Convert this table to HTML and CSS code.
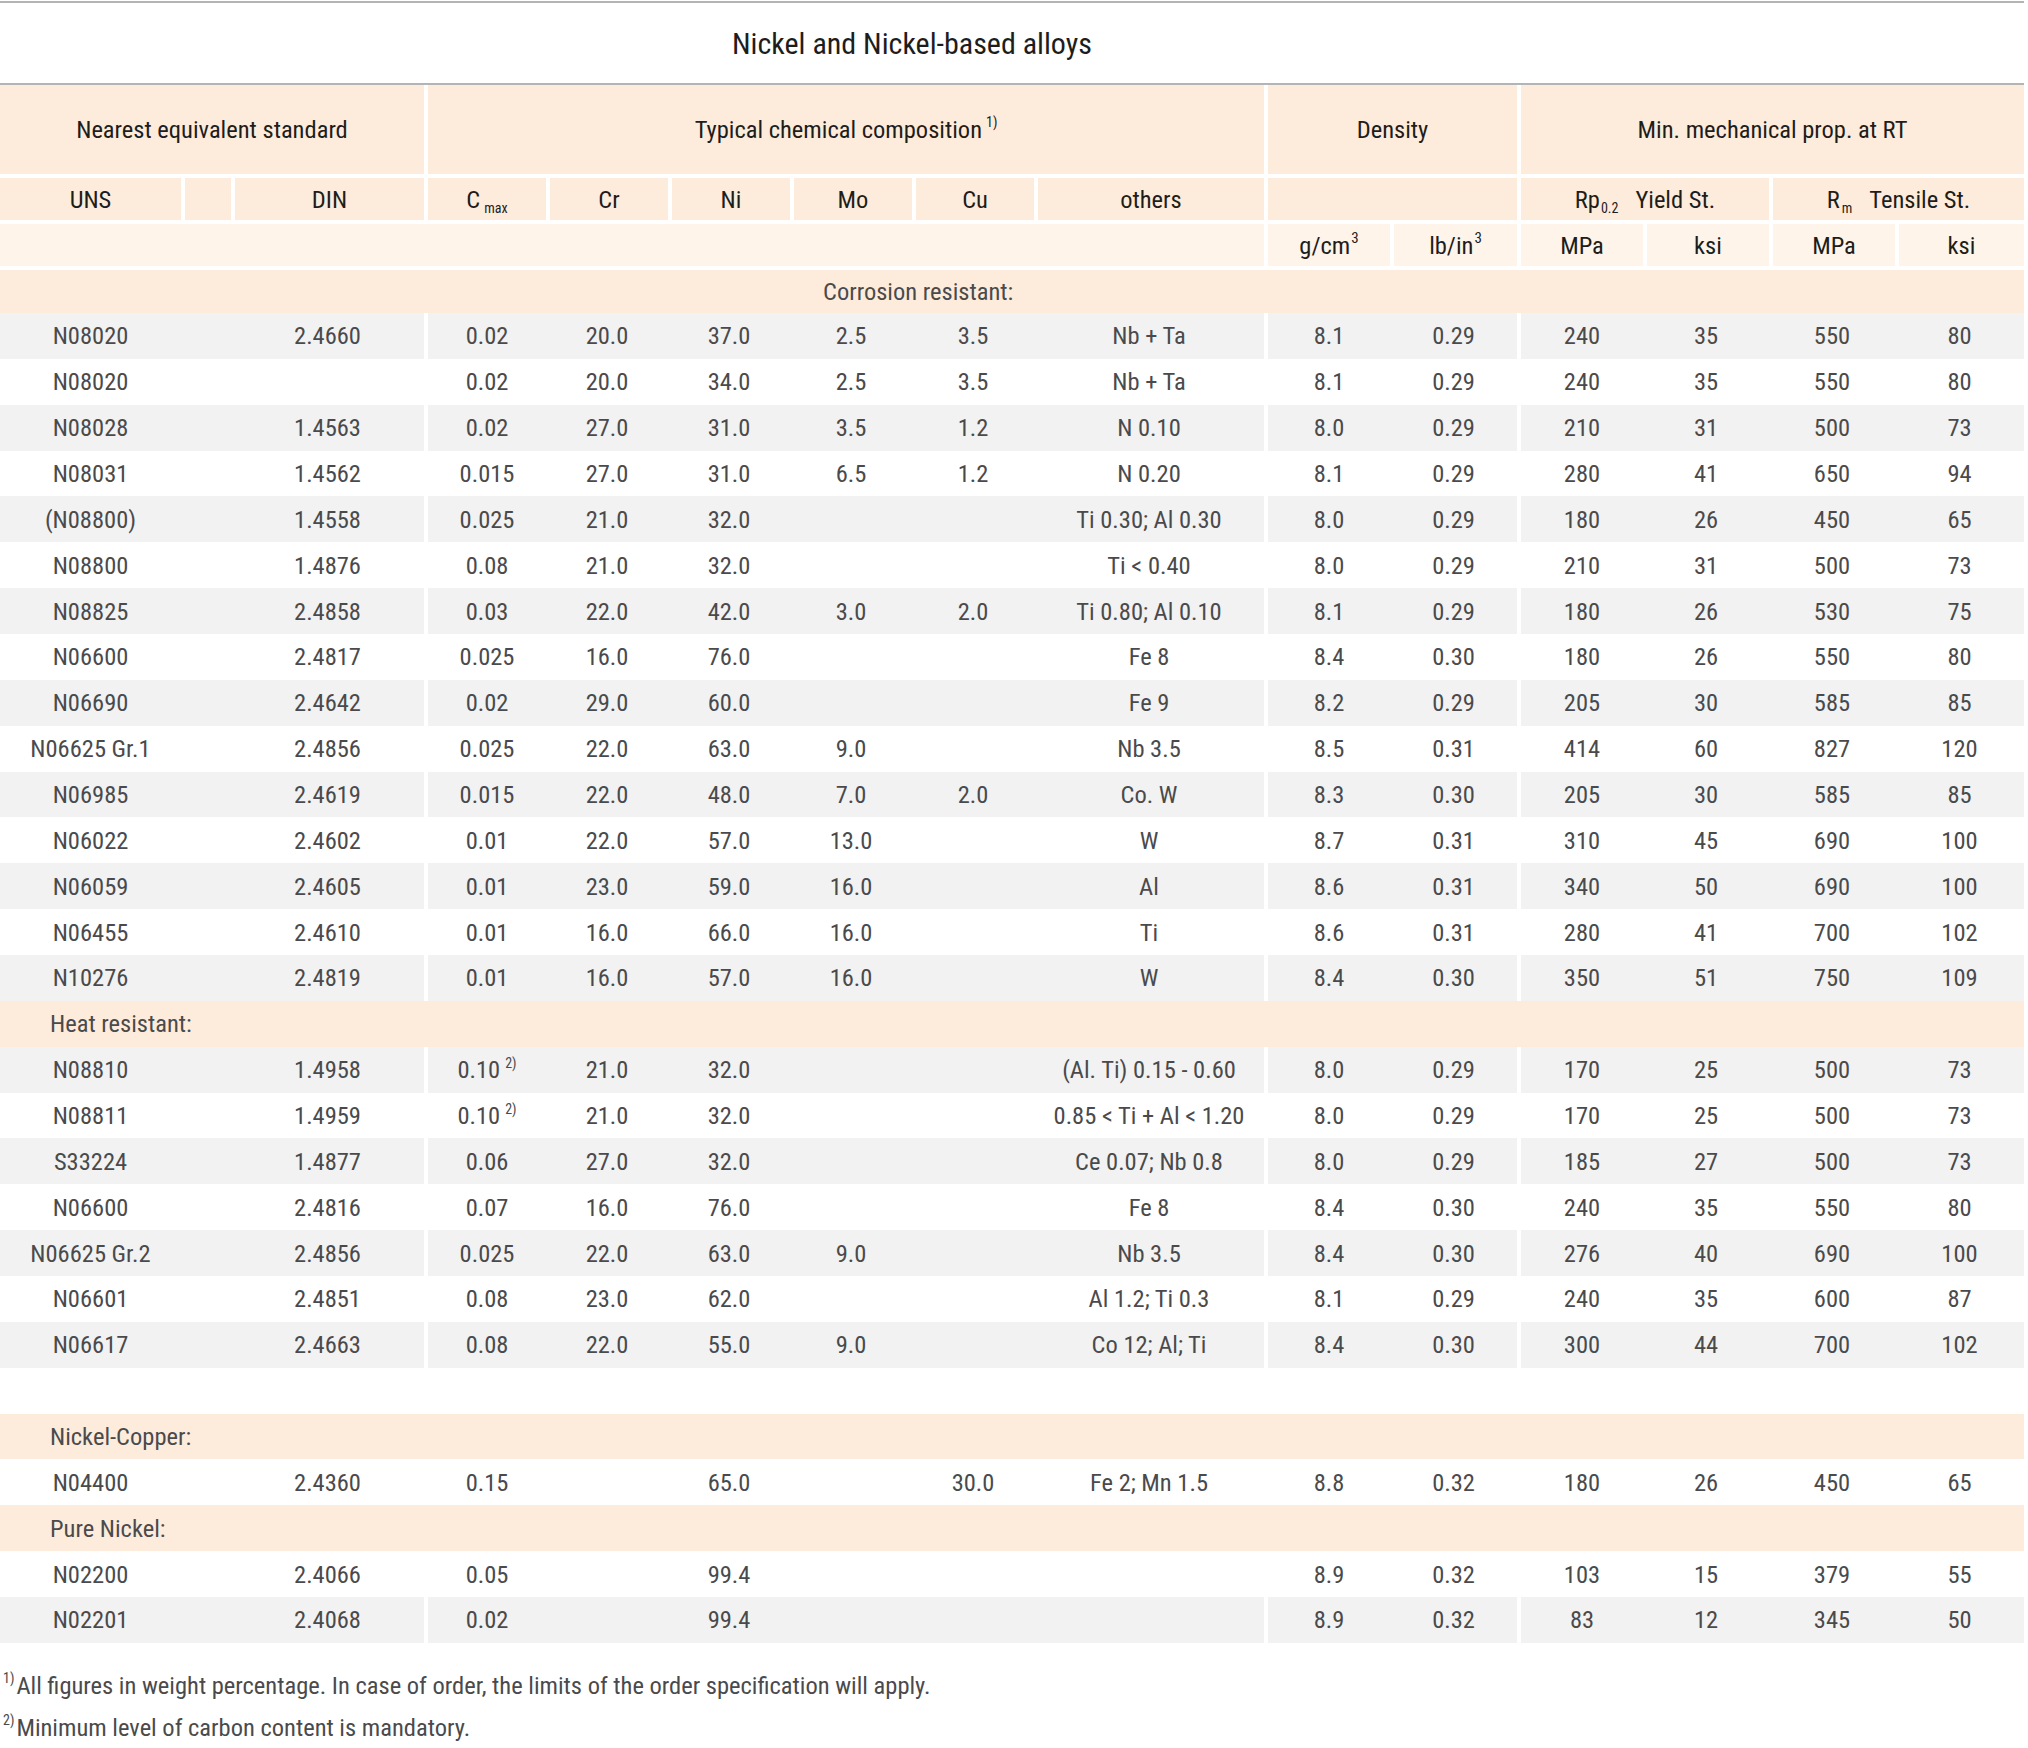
FILE: index.html
```html
<!DOCTYPE html>
<html lang="en">
<head>
<meta charset="utf-8">
<title>Nickel and Nickel-based alloys</title>
<link rel="stylesheet" href="styles.css">
</head>
<body>
<div class="sheet">
  <div class="title">Nickel and Nickel-based alloys</div>

  <div class="row hdr1">
    <div class="c s3">Nearest equivalent standard</div>
    <div class="c s6 g">Typical chemical composition <sup class="fn">1)</sup></div>
    <div class="c s2 g">Density</div>
    <div class="c s4 g">Min. mechanical prop. at RT</div>
  </div>

  <div class="row hdr2">
    <div class="c">UNS</div>
    <div class="c g"></div>
    <div class="c g">DIN</div>
    <div class="c g">C<sub class="sb sb-c">max</sub></div>
    <div class="c g">Cr</div>
    <div class="c g">Ni</div>
    <div class="c g">Mo</div>
    <div class="c g">Cu</div>
    <div class="c g">others</div>
    <div class="c s2 g"></div>
    <div class="c s2 g">Rp<sub class="sb sb-p">0.2</sub><span class="lbl">Yield St.</span></div>
    <div class="c s2 g">R<sub class="sb sb-r">m</sub><span class="lbl">Tensile St.</span></div>
  </div>

  <div class="row hdr3">
    <div class="c s9"></div>
    <div class="c g">g/cm<sup class="pw">3</sup></div>
    <div class="c g">lb/in<sup class="pw">3</sup></div>
    <div class="c g">MPa</div>
    <div class="c g">ksi</div>
    <div class="c g">MPa</div>
    <div class="c g">ksi</div>
  </div>

  <div class="row sect first"><div class="c s15 lab-mid">Corrosion resistant:</div></div>

  <div class="row alt"><div class="c">N08020</div><div class="c"></div><div class="c">2.4660</div><div class="c g">0.02</div><div class="c">20.0</div><div class="c">37.0</div><div class="c">2.5</div><div class="c">3.5</div><div class="c">Nb + Ta</div><div class="c g">8.1</div><div class="c">0.29</div><div class="c g">240</div><div class="c">35</div><div class="c">550</div><div class="c">80</div></div>
  <div class="row"><div class="c">N08020</div><div class="c"></div><div class="c"></div><div class="c g">0.02</div><div class="c">20.0</div><div class="c">34.0</div><div class="c">2.5</div><div class="c">3.5</div><div class="c">Nb + Ta</div><div class="c g">8.1</div><div class="c">0.29</div><div class="c g">240</div><div class="c">35</div><div class="c">550</div><div class="c">80</div></div>
  <div class="row alt"><div class="c">N08028</div><div class="c"></div><div class="c">1.4563</div><div class="c g">0.02</div><div class="c">27.0</div><div class="c">31.0</div><div class="c">3.5</div><div class="c">1.2</div><div class="c">N 0.10</div><div class="c g">8.0</div><div class="c">0.29</div><div class="c g">210</div><div class="c">31</div><div class="c">500</div><div class="c">73</div></div>
  <div class="row"><div class="c">N08031</div><div class="c"></div><div class="c">1.4562</div><div class="c g">0.015</div><div class="c">27.0</div><div class="c">31.0</div><div class="c">6.5</div><div class="c">1.2</div><div class="c">N 0.20</div><div class="c g">8.1</div><div class="c">0.29</div><div class="c g">280</div><div class="c">41</div><div class="c">650</div><div class="c">94</div></div>
  <div class="row alt"><div class="c">(N08800)</div><div class="c"></div><div class="c">1.4558</div><div class="c g">0.025</div><div class="c">21.0</div><div class="c">32.0</div><div class="c"></div><div class="c"></div><div class="c">Ti 0.30; Al 0.30</div><div class="c g">8.0</div><div class="c">0.29</div><div class="c g">180</div><div class="c">26</div><div class="c">450</div><div class="c">65</div></div>
  <div class="row"><div class="c">N08800</div><div class="c"></div><div class="c">1.4876</div><div class="c g">0.08</div><div class="c">21.0</div><div class="c">32.0</div><div class="c"></div><div class="c"></div><div class="c">Ti &lt; 0.40</div><div class="c g">8.0</div><div class="c">0.29</div><div class="c g">210</div><div class="c">31</div><div class="c">500</div><div class="c">73</div></div>
  <div class="row alt"><div class="c">N08825</div><div class="c"></div><div class="c">2.4858</div><div class="c g">0.03</div><div class="c">22.0</div><div class="c">42.0</div><div class="c">3.0</div><div class="c">2.0</div><div class="c">Ti 0.80; Al 0.10</div><div class="c g">8.1</div><div class="c">0.29</div><div class="c g">180</div><div class="c">26</div><div class="c">530</div><div class="c">75</div></div>
  <div class="row"><div class="c">N06600</div><div class="c"></div><div class="c">2.4817</div><div class="c g">0.025</div><div class="c">16.0</div><div class="c">76.0</div><div class="c"></div><div class="c"></div><div class="c">Fe 8</div><div class="c g">8.4</div><div class="c">0.30</div><div class="c g">180</div><div class="c">26</div><div class="c">550</div><div class="c">80</div></div>
  <div class="row alt"><div class="c">N06690</div><div class="c"></div><div class="c">2.4642</div><div class="c g">0.02</div><div class="c">29.0</div><div class="c">60.0</div><div class="c"></div><div class="c"></div><div class="c">Fe 9</div><div class="c g">8.2</div><div class="c">0.29</div><div class="c g">205</div><div class="c">30</div><div class="c">585</div><div class="c">85</div></div>
  <div class="row"><div class="c">N06625 Gr.1</div><div class="c"></div><div class="c">2.4856</div><div class="c g">0.025</div><div class="c">22.0</div><div class="c">63.0</div><div class="c">9.0</div><div class="c"></div><div class="c">Nb 3.5</div><div class="c g">8.5</div><div class="c">0.31</div><div class="c g">414</div><div class="c">60</div><div class="c">827</div><div class="c">120</div></div>
  <div class="row alt"><div class="c">N06985</div><div class="c"></div><div class="c">2.4619</div><div class="c g">0.015</div><div class="c">22.0</div><div class="c">48.0</div><div class="c">7.0</div><div class="c">2.0</div><div class="c">Co. W</div><div class="c g">8.3</div><div class="c">0.30</div><div class="c g">205</div><div class="c">30</div><div class="c">585</div><div class="c">85</div></div>
  <div class="row"><div class="c">N06022</div><div class="c"></div><div class="c">2.4602</div><div class="c g">0.01</div><div class="c">22.0</div><div class="c">57.0</div><div class="c">13.0</div><div class="c"></div><div class="c">W</div><div class="c g">8.7</div><div class="c">0.31</div><div class="c g">310</div><div class="c">45</div><div class="c">690</div><div class="c">100</div></div>
  <div class="row alt"><div class="c">N06059</div><div class="c"></div><div class="c">2.4605</div><div class="c g">0.01</div><div class="c">23.0</div><div class="c">59.0</div><div class="c">16.0</div><div class="c"></div><div class="c">Al</div><div class="c g">8.6</div><div class="c">0.31</div><div class="c g">340</div><div class="c">50</div><div class="c">690</div><div class="c">100</div></div>
  <div class="row"><div class="c">N06455</div><div class="c"></div><div class="c">2.4610</div><div class="c g">0.01</div><div class="c">16.0</div><div class="c">66.0</div><div class="c">16.0</div><div class="c"></div><div class="c">Ti</div><div class="c g">8.6</div><div class="c">0.31</div><div class="c g">280</div><div class="c">41</div><div class="c">700</div><div class="c">102</div></div>
  <div class="row alt"><div class="c">N10276</div><div class="c"></div><div class="c">2.4819</div><div class="c g">0.01</div><div class="c">16.0</div><div class="c">57.0</div><div class="c">16.0</div><div class="c"></div><div class="c">W</div><div class="c g">8.4</div><div class="c">0.30</div><div class="c g">350</div><div class="c">51</div><div class="c">750</div><div class="c">109</div></div>

  <div class="row sect"><div class="c s15 lab">Heat resistant:</div></div>

  <div class="row alt"><div class="c">N08810</div><div class="c"></div><div class="c">1.4958</div><div class="c g">0.10<sup class="fn2">2)</sup></div><div class="c">21.0</div><div class="c">32.0</div><div class="c"></div><div class="c"></div><div class="c">(Al. Ti) 0.15 - 0.60</div><div class="c g">8.0</div><div class="c">0.29</div><div class="c g">170</div><div class="c">25</div><div class="c">500</div><div class="c">73</div></div>
  <div class="row"><div class="c">N08811</div><div class="c"></div><div class="c">1.4959</div><div class="c g">0.10<sup class="fn2">2)</sup></div><div class="c">21.0</div><div class="c">32.0</div><div class="c"></div><div class="c"></div><div class="c">0.85 &lt; Ti + Al &lt; 1.20</div><div class="c g">8.0</div><div class="c">0.29</div><div class="c g">170</div><div class="c">25</div><div class="c">500</div><div class="c">73</div></div>
  <div class="row alt"><div class="c">S33224</div><div class="c"></div><div class="c">1.4877</div><div class="c g">0.06</div><div class="c">27.0</div><div class="c">32.0</div><div class="c"></div><div class="c"></div><div class="c">Ce 0.07; Nb 0.8</div><div class="c g">8.0</div><div class="c">0.29</div><div class="c g">185</div><div class="c">27</div><div class="c">500</div><div class="c">73</div></div>
  <div class="row"><div class="c">N06600</div><div class="c"></div><div class="c">2.4816</div><div class="c g">0.07</div><div class="c">16.0</div><div class="c">76.0</div><div class="c"></div><div class="c"></div><div class="c">Fe 8</div><div class="c g">8.4</div><div class="c">0.30</div><div class="c g">240</div><div class="c">35</div><div class="c">550</div><div class="c">80</div></div>
  <div class="row alt"><div class="c">N06625 Gr.2</div><div class="c"></div><div class="c">2.4856</div><div class="c g">0.025</div><div class="c">22.0</div><div class="c">63.0</div><div class="c">9.0</div><div class="c"></div><div class="c">Nb 3.5</div><div class="c g">8.4</div><div class="c">0.30</div><div class="c g">276</div><div class="c">40</div><div class="c">690</div><div class="c">100</div></div>
  <div class="row"><div class="c">N06601</div><div class="c"></div><div class="c">2.4851</div><div class="c g">0.08</div><div class="c">23.0</div><div class="c">62.0</div><div class="c"></div><div class="c"></div><div class="c">Al 1.2; Ti 0.3</div><div class="c g">8.1</div><div class="c">0.29</div><div class="c g">240</div><div class="c">35</div><div class="c">600</div><div class="c">87</div></div>
  <div class="row alt"><div class="c">N06617</div><div class="c"></div><div class="c">2.4663</div><div class="c g">0.08</div><div class="c">22.0</div><div class="c">55.0</div><div class="c">9.0</div><div class="c"></div><div class="c">Co 12; Al; Ti</div><div class="c g">8.4</div><div class="c">0.30</div><div class="c g">300</div><div class="c">44</div><div class="c">700</div><div class="c">102</div></div>

  <div class="row blank"></div>

  <div class="row sect"><div class="c s15 lab">Nickel-Copper:</div></div>
  <div class="row"><div class="c">N04400</div><div class="c"></div><div class="c">2.4360</div><div class="c g">0.15</div><div class="c"></div><div class="c">65.0</div><div class="c"></div><div class="c">30.0</div><div class="c">Fe 2; Mn 1.5</div><div class="c g">8.8</div><div class="c">0.32</div><div class="c g">180</div><div class="c">26</div><div class="c">450</div><div class="c">65</div></div>

  <div class="row sect"><div class="c s15 lab">Pure Nickel:</div></div>
  <div class="row"><div class="c">N02200</div><div class="c"></div><div class="c">2.4066</div><div class="c g">0.05</div><div class="c"></div><div class="c">99.4</div><div class="c"></div><div class="c"></div><div class="c"></div><div class="c g">8.9</div><div class="c">0.32</div><div class="c g">103</div><div class="c">15</div><div class="c">379</div><div class="c">55</div></div>
  <div class="row alt"><div class="c">N02201</div><div class="c"></div><div class="c">2.4068</div><div class="c g">0.02</div><div class="c"></div><div class="c">99.4</div><div class="c"></div><div class="c"></div><div class="c"></div><div class="c g">8.9</div><div class="c">0.32</div><div class="c g">83</div><div class="c">12</div><div class="c">345</div><div class="c">50</div></div>

  <div class="notes">
    <p class="note"><sup class="nsup">1)</sup>All figures in weight percentage. In case of order, the limits of the order specification will apply.</p>
    <p class="note"><sup class="nsup">2)</sup>Minimum level of carbon content is mandatory.</p>
  </div>
</div>
</body>
</html>
```
FILE: styles.css
```css
html, body {
  margin: 0;
  padding: 0;
  background: #ffffff;
}

body {
  font-family: "Roboto Condensed", "Roboto", "Liberation Sans", sans-serif;
  font-stretch: condensed;
  color: #4a4a4c;
}

.sheet {
  width: 2024px;
}

.title {
  height: 80px;
  margin-top: 1px;
  border-top: 2px solid #b4b4b4;
  border-bottom: 2px solid #b4b4b4;
  display: flex;
  align-items: center;
  padding-left: 732px;
  font-size: 30px;
  color: #1d1d1b;
}

.row {
  display: grid;
  grid-template-columns: 181px 50px 193px 122px 122px 122px 122px 122px 230px 126px 127px 126px 126px 126px 129px;
  height: 45.86px;
  box-sizing: border-box;
}

.c {
  box-sizing: border-box;
  display: flex;
  align-items: center;
  justify-content: center;
  white-space: nowrap;
  font-size: 24.5px;
  min-width: 0;
}

.g {
  border-left: 4px solid #ffffff;
}

.s2 { grid-column: span 2; }
.s3 { grid-column: span 3; }
.s4 { grid-column: span 4; }
.s6 { grid-column: span 6; }
.s9 { grid-column: span 9; }
.s15 { grid-column: span 15; }

.row.alt .c {
  background: #f2f2f2;
}

/* header rows */
.hdr1 {
  height: 89px;
}
.hdr1 .c,
.hdr2 .c {
  background: #fdecdb;
  color: #1d1d1b;
}
.hdr2 {
  height: 46px;
}
.hdr2 .c {
  border-top: 4px solid #ffffff;
}
.hdr3 {
  height: 46px;
}
.hdr3 .c {
  background: #fef4ea;
  color: #1d1d1b;
  border-top: 4px solid #ffffff;
}

.sect .c {
  background: #fdecdb;
}
.sect.first {
  height: 47px;
}
.sect.first .c {
  border-top: 4px solid #ffffff;
}
.lab {
  justify-content: flex-start;
  padding-left: 50px;
}
.lab-mid {
  justify-content: flex-start;
  padding-left: 823px;
}

.sb {
  font-size: 14px;
  position: relative;
  top: 9px;
  vertical-align: baseline;
}
.sb-c { margin-left: 4px; }
.sb-p { margin-left: 1px; }
.sb-r { margin-left: 2px; }
.lbl {
  margin-left: 17px;
}
.fn {
  font-size: 14px;
  position: relative;
  top: -8px;
  vertical-align: baseline;
  margin-left: 4px;
}
.pw {
  font-size: 15px;
  position: relative;
  top: -7px;
  vertical-align: baseline;
  margin-left: 1px;
}
.fn2 {
  font-size: 14px;
  position: relative;
  top: -7px;
  vertical-align: baseline;
  margin-left: 5px;
}

.blank {
  height: 45.86px;
}

.notes {
  padding-top: 22px;
}
.note {
  margin: 0;
  height: 42px;
  display: flex;
  align-items: center;
  padding-left: 3px;
  font-size: 24.5px;
  color: #4a4a4c;
  white-space: nowrap;
}
.nsup {
  font-size: 14px;
  position: relative;
  top: -8px;
  vertical-align: baseline;
  margin-right: 2px;
}
```
